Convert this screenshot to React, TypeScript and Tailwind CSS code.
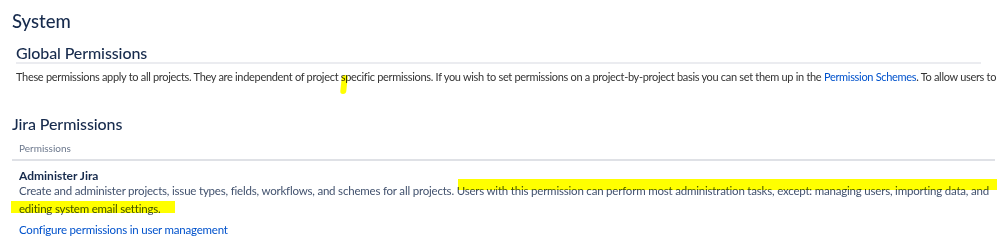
import React from "react";

const font = { fontFamily: 'Lato, "Noto Sans", Arial, sans-serif' };

export default function App() {
  return (
    <div className="relative w-[997px] h-[246px] overflow-hidden bg-white text-[#172b4d]" style={font}>
      <h1 className="pl-3 pt-[9px] text-[18.5px] leading-6 font-medium">System</h1>

      {/* Global permissions */}
      <section className="mx-4 mt-[10px]">
        <h2 className="border-b-2 border-[#ebecf0] text-[16px] leading-[19px] font-medium tracking-[-0.1px]">Global Permissions</h2>
        <p className="mt-[5px] whitespace-nowrap text-[11px] leading-4 tracking-[-0.31px] text-[#333]">
          These permissions apply to all projects. They are independent of project specific permissions. If you wish to set permissions on a project-by-project basis you can set them up in the{" "}
          <a className="text-[#0052cc]">Permission Schemes</a>. To allow users to log into Jira, they must have the Jira Users permission.
        </p>
      </section>

      {/* Jira permissions */}
      <section className="mt-[28px] ml-3 mr-[2px]">
        <h2 className="text-[16px] leading-[22px] font-medium tracking-[-0.1px]">Jira Permissions</h2>
        <div className="mt-[5px] border-b-2 border-[#dfe1e6] px-[7px] pb-[3px] text-[10px] leading-4 text-[#6b778c]">Permissions</div>
        <div className="px-[7px] pt-[8px]">
          <div className="text-[12px] leading-[13px] font-bold">Administer Jira</div>
          <div className="text-[11.5px] leading-[18px] tracking-[-0.2px] text-[#42526e] whitespace-nowrap">
            Create and administer projects, issue types, fields, workflows, and schemes for all projects. Users with this permission can perform most administration tasks, except: managing users, importing data, and
            <br />
            editing system email settings.
          </div>
          <a className="mt-[4px] block text-[11.5px] leading-4 tracking-[-0.2px] text-[#0052cc]">Configure permissions in user management</a>
        </div>
      </section>

      {/* highlighter marks */}
      <div className="pointer-events-none absolute left-[341px] top-[75px] h-[19px] w-[6px] -skew-x-6 rounded-sm bg-[#ffff00] mix-blend-multiply" />
      <div className="pointer-events-none absolute left-[458px] top-[179px] h-[11px] w-[539px] bg-[#ffff00] mix-blend-multiply" />
      <div className="pointer-events-none absolute left-[11px] top-[201px] h-[12px] w-[164px] bg-[#ffff00] mix-blend-multiply" />
    </div>
  );
}
